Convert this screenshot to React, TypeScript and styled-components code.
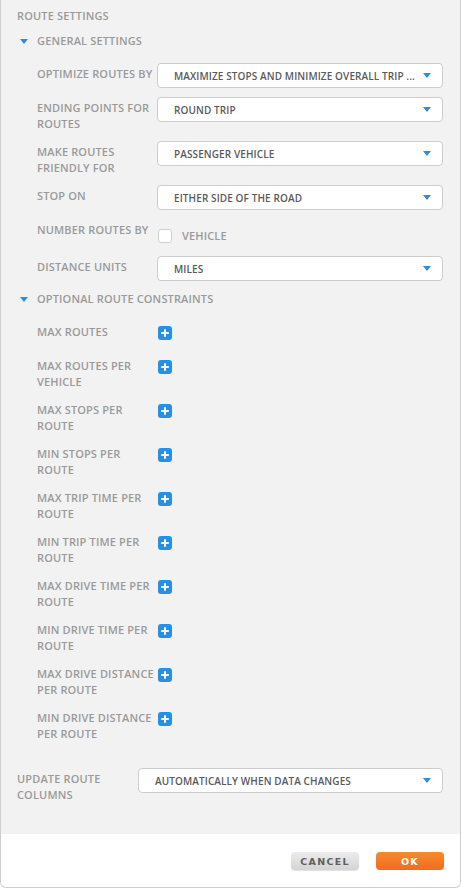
import React, { useState } from "react";
import styled, { createGlobalStyle } from "styled-components";

const GlobalStyle = createGlobalStyle`
  html, body { margin: 0; padding: 0; background: #ffffff; }
  body { font-family: "Open Sans", "DejaVu Sans", sans-serif; }
  * { box-sizing: border-box; }
`;

const Panel = styled.div`
  width: 461px;
  height: 888px;
  display: flex;
  flex-direction: column;
  border: 1px solid #cfcfcf;
  border-top: none;
  border-radius: 0 0 6px 6px;
  overflow: hidden;
  background: #f2f2f2;
`;

const Body = styled.div`
  flex: 1;
  padding: 8px 17px 0 16px;
`;

const Title = styled.div`
  font-size: 11px;
  font-weight: 600;
  letter-spacing: 0.15px;
  color: #9a9a9a;
  line-height: 16px;
`;

const SectionHead = styled.div<{ $top: number }>`
  display: flex;
  align-items: center;
  gap: 9px;
  margin-top: ${(p) => p.$top}px;
  padding-left: 3px;
  font-size: 11px;
  font-weight: 600;
  letter-spacing: 0.15px;
  color: #9a9a9a;
  line-height: 16px;
`;

const Caret = styled.span<{ $size?: number }>`
  display: inline-block;
  width: 0;
  height: 0;
  border-left: ${(p) => p.$size ?? 4.5}px solid transparent;
  border-right: ${(p) => p.$size ?? 4.5}px solid transparent;
  border-top: ${(p) => (p.$size ?? 4.5) + 0.5}px solid #2b8ee0;
`;

const Fields = styled.div<{ $top: number }>`
  display: flex;
  flex-direction: column;
  gap: 9px;
  margin-top: ${(p) => p.$top}px;
  padding-left: 20px;
`;

const Row = styled.div<{ $label?: number }>`
  display: grid;
  grid-template-columns: ${(p) => p.$label ?? 120}px 1fr;
  align-items: start;
`;

const Label = styled.div`
  padding-top: 3px;
  padding-right: 4px;
  font-size: 11px;
  font-weight: 600;
  letter-spacing: 0.15px;
  color: #9a9a9a;
  line-height: 16px;
`;

const Select = styled.div`
  height: 25px;
  display: flex;
  align-items: center;
  justify-content: space-between;
  padding: 0 11px 0 16px;
  background: #ffffff;
  border: 1px solid #cdcdcd;
  border-radius: 4px;
  font-size: 10px;
  font-weight: 600;
  letter-spacing: 0.1px;
  color: #5a5a5a;
  white-space: nowrap;
  overflow: hidden;
`;

const Check = styled.label`
  display: flex;
  align-items: center;
  gap: 10px;
  height: 28px;
  padding-top: 5px;
  padding-left: 1px;
  font-size: 11px;
  font-weight: 600;
  letter-spacing: 0.15px;
  color: #9a9a9a;
  cursor: pointer;
`;

const Box = styled.span<{ $on: boolean }>`
  width: 14px;
  height: 14px;
  border: 1px solid #cfcfcf;
  border-radius: 3px;
  background: ${(p) => (p.$on ? "#2b8ee0" : "#ffffff")};
`;

const Constraints = styled.div`
  display: flex;
  flex-direction: column;
  gap: 12px;
  margin-top: 17px;
  padding-left: 20px;
`;

const ConstraintRow = styled.div`
  display: grid;
  grid-template-columns: 121px 14px;
  min-height: 22px;
  align-items: start;
`;

const ConstraintLabel = styled.div`
  font-size: 11px;
  font-weight: 600;
  letter-spacing: 0.15px;
  color: #9a9a9a;
  line-height: 16px;
  padding-right: 4px;
`;

const PlusButton = styled.button`
  width: 14px;
  height: 14px;
  margin-top: 2px;
  padding: 0;
  border: none;
  border-radius: 3px;
  background: #2790e6;
  display: flex;
  align-items: center;
  justify-content: center;
  cursor: pointer;
`;

const Footer = styled.div`
  height: 53px;
  background: #ffffff;
  display: flex;
  justify-content: flex-end;
  align-items: flex-start;
  gap: 17px;
  padding: 18px 16px 0 0;
`;

const Button = styled.button<{ $primary?: boolean }>`
  width: 68px;
  height: 18px;
  border: none;
  border-radius: 4px;
  font-family: "DejaVu Sans", sans-serif;
  font-size: 9.5px;
  font-weight: 700;
  letter-spacing: 1.3px;
  color: ${(p) => (p.$primary ? "#ffffff" : "#5f5f5f")};
  background: ${(p) =>
    p.$primary
      ? "linear-gradient(#f68a2c, #f06c20)"
      : "linear-gradient(#ececec, #d4d4d4)"};
  box-shadow: ${(p) => (p.$primary ? "none" : "0 1px 1px rgba(0,0,0,0.12)")};
  cursor: pointer;
`;

const UpdateRow = styled.div`
  display: grid;
  grid-template-columns: 121px 1fr;
  margin-top: 26px;
`;

const Plus = () => (
  <svg width="10" height="10" viewBox="0 0 10 10">
    <path d="M5 1.2v7.6M1.2 5h7.6" stroke="#fff" strokeWidth="2" />
  </svg>
);

const general = [
  { label: "OPTIMIZE ROUTES BY", value: "MAXIMIZE STOPS AND MINIMIZE OVERALL TRIP ..." },
  { label: "ENDING POINTS FOR ROUTES", value: "ROUND TRIP" },
  { label: "MAKE ROUTES FRIENDLY FOR", value: "PASSENGER VEHICLE" },
  { label: "STOP ON", value: "EITHER SIDE OF THE ROAD" },
];

const constraints = [
  "MAX ROUTES",
  "MAX ROUTES PER VEHICLE",
  "MAX STOPS PER ROUTE",
  "MIN STOPS PER ROUTE",
  "MAX TRIP TIME PER ROUTE",
  "MIN TRIP TIME PER ROUTE",
  "MAX DRIVE TIME PER ROUTE",
  "MIN DRIVE TIME PER ROUTE",
  "MAX DRIVE DISTANCE PER ROUTE",
  "MIN DRIVE DISTANCE PER ROUTE",
];

export default function App() {
  const [byVehicle, setByVehicle] = useState(false);

  return (
    <>
      <GlobalStyle />
      <Panel>
        <Body>
          <Title>ROUTE SETTINGS</Title>

          <SectionHead $top={9}>
            <Caret />
            GENERAL SETTINGS
          </SectionHead>
          <Fields $top={14}>
            {general.map((f) => (
              <Row key={f.label}>
                <Label>{f.label}</Label>
                <Select>
                  {f.value}
                  <Caret />
                </Select>
              </Row>
            ))}
            <Row>
              <Label>NUMBER ROUTES BY</Label>
              <Check onClick={() => setByVehicle(!byVehicle)}>
                <Box $on={byVehicle} />
                VEHICLE
              </Check>
            </Row>
            <Row>
              <Label>DISTANCE UNITS</Label>
              <Select>
                MILES
                <Caret />
              </Select>
            </Row>
          </Fields>

          <SectionHead $top={10}>
            <Caret />
            OPTIONAL ROUTE CONSTRAINTS
          </SectionHead>
          <Constraints>
            {constraints.map((c) => (
              <ConstraintRow key={c}>
                <ConstraintLabel>{c}</ConstraintLabel>
                <PlusButton>
                  <Plus />
                </PlusButton>
              </ConstraintRow>
            ))}
          </Constraints>

          <UpdateRow>
            <Label>UPDATE ROUTE COLUMNS</Label>
            <Select>
              AUTOMATICALLY WHEN DATA CHANGES
              <Caret />
            </Select>
          </UpdateRow>
        </Body>
        <Footer>
          <Button>CANCEL</Button>
          <Button $primary>OK</Button>
        </Footer>
      </Panel>
    </>
  );
}
